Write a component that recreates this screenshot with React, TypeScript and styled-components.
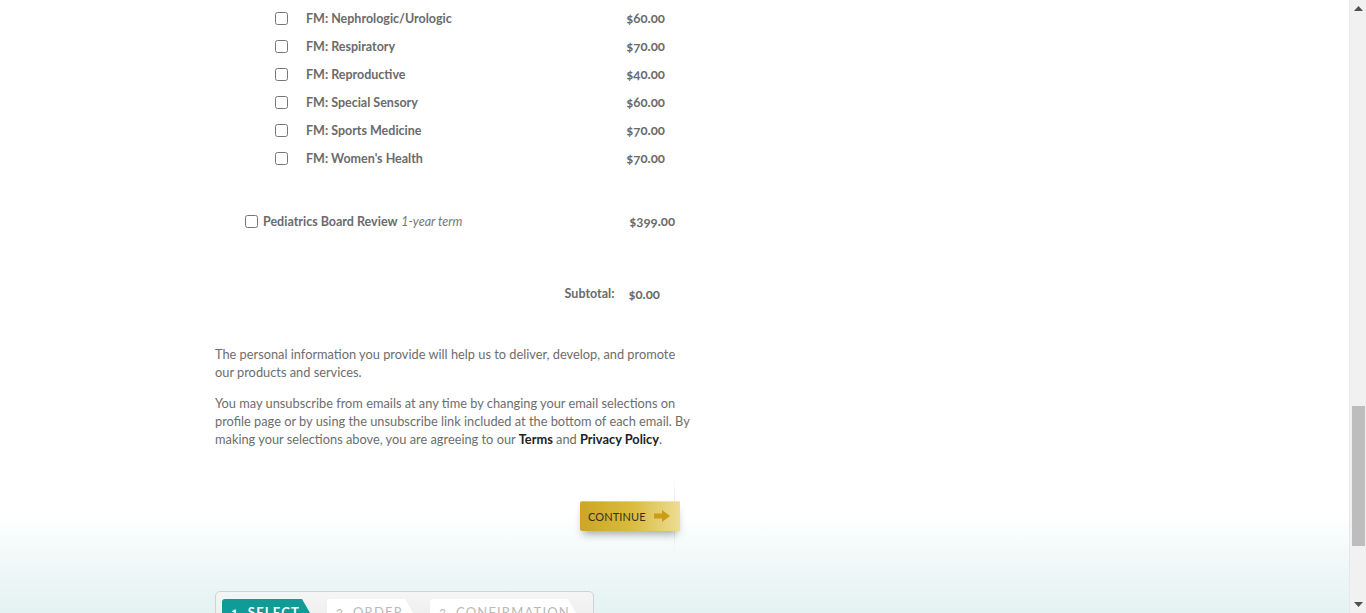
import React from "react";
import styled, { createGlobalStyle } from "styled-components";

const GlobalStyle = createGlobalStyle`
  html, body {
    margin: 0;
    padding: 0;
    height: 613px;
    overflow: hidden;
  }
  body {
    font-family: "Lato", "Liberation Sans", sans-serif;
    color: #666;
  }
`;

type Course = {
  name: string;
  price: string;
};

const courses: Course[] = [
  { name: "FM: Nephrologic/Urologic", price: "$60.00" },
  { name: "FM: Respiratory", price: "$70.00" },
  { name: "FM: Reproductive", price: "$40.00" },
  { name: "FM: Special Sensory", price: "$60.00" },
  { name: "FM: Sports Medicine", price: "$70.00" },
  { name: "FM: Women's Health", price: "$70.00" },
];

// page frame
const Frame = styled.div`
  display: flex;
  height: 613px;
  width: 1366px;
`;

const Page = styled.main`
  flex: 1;
  overflow: hidden;
  background: linear-gradient(
    to bottom,
    #ffffff 0px,
    #ffffff 515px,
    #f2f9f9 555px,
    #e4f2f2 613px
  );
`;

const Column = styled.div`
  width: 481px;
  margin-left: 215px;
  padding-top: 4px;
`;

// course rows
const List = styled.ul`
  list-style: none;
  margin: 0;
  padding: 0;
`;

const Row = styled.li<{ indent: number; width: number; gap: number; height: number }>`
  display: flex;
  align-items: center;
  height: ${(p) => p.height}px;
  width: ${(p) => p.width}px;
  padding-left: ${(p) => p.indent}px;
  box-sizing: border-box;
  gap: ${(p) => p.gap}px;
  font-size: 12.5px;
  font-weight: 700;
  color: #6b6b6b;
`;

const Check = styled.input.attrs({ type: "checkbox" })`
  margin: 0;
  width: 13px;
  height: 13px;
  flex: none;
`;

const Label = styled.span`
  flex: 1;
`;

const Term = styled.em`
  font-weight: 400;
  font-style: italic;
  color: #777;
  margin-left: 1px;
`;

const Price = styled.span`
  font-size: 13.2px;
  font-variant-numeric: oldstyle-nums;
`;

const Feature = styled.div`
  margin-top: 35px;
`;

const Subtotal = styled.div`
  display: flex;
  justify-content: flex-end;
  gap: 14px;
  width: 445px;
  margin-top: 50px;
  font-size: 12.5px;
  font-weight: 700;
  color: #6b6b6b;
  line-height: 18px;
`;

// legal text
const Notes = styled.div`
  margin-top: 42px;
`;

const Para = styled.p`
  margin: 0 0 13px;
  font-size: 12.8px;
  line-height: 18px;
  color: #6d6d6d;
`;

const Strong = styled.a`
  color: #222;
  font-weight: 700;
  text-decoration: none;
`;

// continue button
const Actions = styled.div`
  display: flex;
  justify-content: flex-end;
  width: 460px;
  margin-top: 32px;
`;

const ButtonShade = styled.div`
  padding: 21px 0 18px;
  border-right: 1px solid;
  border-image: linear-gradient(
      to bottom,
      rgba(0, 0, 0, 0),
      rgba(0, 0, 0, 0.12) 40%,
      rgba(0, 0, 0, 0.12) 60%,
      rgba(0, 0, 0, 0)
    )
    1;
`;

const ContinueBtn = styled.button`
  display: flex;
  align-items: center;
  gap: 8px;
  height: 30px;
  width: 100px;
  margin-right: -6px;
  padding: 0 10px 0 8px;
  border: none;
  border-radius: 2px 0 0 2px;
  background: linear-gradient(
    to right,
    #cca624 0%,
    #d9ba3c 50%,
    #ecdc95 100%
  );
  box-shadow: 0 6px 8px -3px rgba(0, 0, 0, 0.35),
    inset 0 1px 0 rgba(255, 255, 255, 0.35);
  font-family: "Lato", "Liberation Sans", sans-serif;
  font-size: 11px;
  letter-spacing: 0.1px;
  color: #34301f;
  cursor: pointer;
`;

// step bar
const Steps = styled.div`
  display: flex;
  gap: 17px;
  width: 379px;
  box-sizing: border-box;
  margin-top: 42px;
  padding: 7px 6px 0;
  height: 40px;
  border: 1px solid #d2d2d2;
  border-radius: 5px;
  background: linear-gradient(to bottom, #f5f5f5, #ebebeb);
`;

const Step = styled.div<{ active: boolean; width: number }>`
  width: ${(p) => p.width}px;
  height: 28px;
  padding: 0 0 0 9px;
  box-sizing: border-box;
  border-radius: 3px 0 0 0;
  clip-path: polygon(0 0, calc(100% - 8px) 0, 100% 50%, calc(100% - 8px) 100%, 0 100%);
  background: ${(p) => (p.active ? "#0f9b96" : "#ffffff")};
  color: ${(p) => (p.active ? "#ffffff" : "#b9b9b9")};
  font-size: 13px;
  font-weight: ${(p) => (p.active ? 700 : 400)};
  letter-spacing: 1.2px;
  line-height: 26px;
  font-variant-numeric: oldstyle-nums;
`;

// fake page scrollbar
const Scrollbar = styled.div`
  width: 17px;
  flex: none;
  display: flex;
  flex-direction: column;
  align-items: center;
  background: #f1f1f1;
  border-left: 1px solid #e8e8e8;
  box-sizing: border-box;
`;

const ScrollArrow = styled.div`
  height: 17px;
  display: flex;
  align-items: center;
  justify-content: center;
`;

const Track = styled.div`
  flex: 1;
  width: 100%;
  display: flex;
  flex-direction: column;
  align-items: center;
`;

const Thumb = styled.div`
  width: 13px;
  height: 140px;
  margin-top: 389px;
  background: #bdbdbd;
`;

const Arrow = ({ down }: { down?: boolean }) => (
  <svg width="9" height="5" viewBox="0 0 9 5">
    <path
      d={down ? "M0 0 H9 L4.5 5 Z" : "M0 5 H9 L4.5 0 Z"}
      fill="#505050"
    />
  </svg>
);

const ContinueArrow = () => (
  <svg width="16" height="12" viewBox="0 0 16 12">
    <path d="M0 3.5 H8 V0 L16 6 L8 12 V8.5 H0 Z" fill="#c99e16" />
  </svg>
);

export default function App() {
  return (
    <>
      <GlobalStyle />
      <Frame>
        <Page>
          <Column>
            <List>
              {courses.map((c) => (
                <Row key={c.name} indent={60} width={450} gap={18} height={28}>
                  <Check />
                  <Label>{c.name}</Label>
                  <Price>{c.price}</Price>
                </Row>
              ))}
            </List>

            <Feature>
              <Row indent={30} width={460} gap={5} height={28}>
                <Check />
                <Label>
                  Pediatrics Board Review <Term>1-year term</Term>
                </Label>
                <Price>$399.00</Price>
              </Row>
            </Feature>

            <Subtotal>
              <span>Subtotal:</span>
              <Price>$0.00</Price>
            </Subtotal>

            <Notes>
              <Para>
                The personal information you provide will help us to deliver,
                develop, and promote our products and services.
              </Para>
              <Para>
                You may unsubscribe from emails at any time by changing your
                email selections on profile page or by using the unsubscribe
                link included at the bottom of each email. By making your
                selections above, you are agreeing to our{" "}
                <Strong href="#">Terms</Strong> and{" "}
                <Strong href="#">Privacy Policy</Strong>.
              </Para>
            </Notes>

            <Actions>
              <ButtonShade>
                <ContinueBtn>
                  CONTINUE
                  <ContinueArrow />
                </ContinueBtn>
              </ButtonShade>
            </Actions>

            <Steps>
              <Step active width={88}>1. SELECT</Step>
              <Step active={false} width={86}>2. ORDER</Step>
              <Step active={false} width={146}>3. CONFIRMATION</Step>
            </Steps>
          </Column>
        </Page>
        <Scrollbar>
          <ScrollArrow>
            <Arrow />
          </ScrollArrow>
          <Track>
            <Thumb />
          </Track>
          <ScrollArrow>
            <Arrow down />
          </ScrollArrow>
        </Scrollbar>
      </Frame>
    </>
  );
}
